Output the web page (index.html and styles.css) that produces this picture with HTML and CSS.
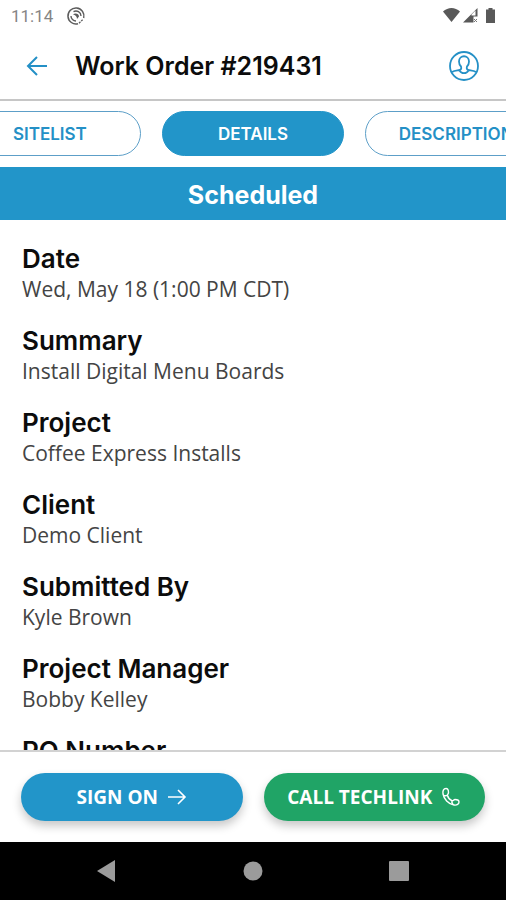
FILE: index.html
```html
<!DOCTYPE html>
<html lang="en">
<head>
<meta charset="utf-8">
<meta name="viewport" content="width=device-width, initial-scale=1">
<title>Work Order #219431</title>
<link rel="stylesheet" href="styles.css">
</head>
<body>
<div class="app">
  <div class="status">
    <span class="time">11:14</span>
    <svg class="status-app" width="20" height="20" viewBox="0 0 20 20" fill="none" stroke="#5c5c5c">
      <path d="M12 17.700A8 8 0 1 1 17.700 12" stroke-width="1.500"/>
      <path d="M13 17.200l4.200-4" stroke-width="1.300" stroke-dasharray="2 1"/>
      <path d="M10 15a5 5 0 0 1-5-5M7.500 5.700A5 5 0 0 1 15 10" stroke-width="1.400"/>
      <path d="M7 8.500C9 6.500 13 7.500 13 10.500L11 13c0-2.500-1.500-4-4-4.500z" fill="#5c5c5c" stroke="none"/>
    </svg>
    <svg class="status-icons" width="56" height="18" viewBox="0 0 56 18" fill="#595959">
      <path d="M1 4.500C6-.2 13-.2 18 4.500L9.500 15z"/>
      <path d="M21 15.500L35.500 1v8.500h-4v6z"/>
      <path d="M29.500 7.500l4-4v5h-4z" fill="#fff"/>
      <path d="M32 12l3 3m0-3l-3 3" stroke="#777"/>
      <path d="M46.500 1h4v1.500H53V16h-9V2.500h2.500z"/>
    </svg>
  </div>
  <header class="header">
    <button class="icon-button" aria-label="Back">
      <svg width="22" height="22" viewBox="0 0 22 22" fill="none" stroke="#2490c6" stroke-width="2"><path d="M21 11H2M11 2L2 11l9 9"/></svg>
    </button>
    <h1>Work Order #219431</h1>
    <button class="icon-button" aria-label="Profile">
      <svg width="32" height="32" viewBox="0 0 32 32" fill="none" stroke="#2490c6" stroke-width="1.800">
        <circle cx="16" cy="16" r="14"/>
        <path d="M4 22c2.500-1.700 5-1.500 7.500-2 2-.5 2-2 1.500-3.500-1.500-1.500-2-3-2-5C11 4.500 21 4.500 21 11.500c0 2-.5 3.500-2 5-.5 1.500-.5 3 1.500 3.500 2.500.5 5 .3 7.500 2"/>
        <path d="M11.500 20.500c2 3.500 7 3.500 9 0"/>
      </svg>
    </button>
  </header>
  <nav class="tabs">
    <button class="tab">SITELIST</button>
    <button class="tab active">DETAILS</button>
    <button class="tab">DESCRIPTION</button>
  </nav>
  <h2 class="banner">Scheduled</h2>
  <main class="details">
    <dl>
      <div class="item"><dt>Date</dt><dd>Wed, May 18 (1:00 PM CDT)</dd></div>
      <div class="item"><dt>Summary</dt><dd>Install Digital Menu Boards</dd></div>
      <div class="item"><dt>Project</dt><dd>Coffee Express Installs</dd></div>
      <div class="item"><dt>Client</dt><dd>Demo Client</dd></div>
      <div class="item"><dt>Submitted By</dt><dd>Kyle Brown</dd></div>
      <div class="item"><dt>Project Manager</dt><dd>Bobby Kelley</dd></div>
      <div class="item"><dt>PO Number</dt></div>
    </dl>
  </main>
  <footer class="actions">
    <button class="action">SIGN ON
      <svg width="20" height="20" viewBox="0 0 20 20" fill="none" stroke="#fff" stroke-width="1.600"><path d="M1 10h17M11 3l7 7-7 7"/></svg>
    </button>
    <button class="action call">CALL TECHLINK
      <svg width="20" height="20" viewBox="0 0 20 20" fill="none" stroke="#fff" stroke-width="1.400" stroke-linejoin="round"><path d="M5 1.500C2.500 1.500 1.500 4 2 7c1 5 5 10 11 11 3 .5 5-1 5-3 0-1.500-2-2.500-4-2.500-1.500 0-1.500 1.500-3 1.200C9 13 7 10.500 6.500 8.500 6.300 7.500 7.500 7 7.500 5.500S7 1.500 5 1.500z"/><path d="M3 8.500c1.500.5 2.500.5 3.500-.5M11 13.700c-.5 1.300 0 2.300 1 3.300"/></svg>
    </button>
  </footer>
  <div class="system-nav">
    <button aria-label="System back"><svg width="20" height="22" viewBox="0 0 20 22" fill="#9b9b9b"><path d="M18 0v22L0 11z"/></svg></button>
    <button aria-label="Home"><svg width="20" height="20" viewBox="0 0 20 20" fill="#9b9b9b"><circle cx="10" cy="10" r="9.500"/></svg></button>
    <button aria-label="Recent apps"><svg width="20" height="20" viewBox="0 0 20 20" fill="#9b9b9b"><rect width="20" height="20" rx="1"/></svg></button>
  </div>
</div>
</body>
</html>
```
FILE: styles.css
```css
* { box-sizing: border-box; }
body { margin: 0; background: #fff; color: #0c0c0c; font-family: "Open Sans", sans-serif; }
button { margin: 0; padding: 0; border: 0; background: none; font: inherit; cursor: pointer; }
svg { display: block; flex: none; }
h1, h2, dl, dd { margin: 0; }
.app { display: flex; flex-direction: column; height: 100vh; overflow: hidden; }
.status { display: flex; align-items: center; height: 32px; flex: none; padding: 0 8px 0 11px; }
.time { width: 55px; color: #858585; font: 400 17px/32px Roboto, sans-serif; }
.status-icons { margin-left: auto; }
.header { display: flex; align-items: center; flex: none; height: 69px; padding: 0 26px; border-bottom: 2px solid #c6c6c6; }
.header h1 { flex: 1; padding-left: 27px; font: 600 25px/32px Inter, sans-serif; }
.tabs { display: flex; flex: none; justify-content: center; gap: 21px; padding: 10px 0 11px; overflow: hidden; }
.tab { flex: 0 0 36%; height: 45px; border: 1px solid #5d9fc8; border-radius: 24px; color: #2490c6; font: 600 17px/20px Inter, sans-serif; }
.tab.active { background: #2295c9; border-color: #2295c9; color: #fff; }
.banner { flex: none; padding: 12px 0 9px; background: #2295c9; color: #fff; text-align: center; font: 700 25px/32px Inter, sans-serif; }
.details { flex: 1; min-height: 0; padding: 24px 22px 0; overflow: hidden; }
.item { margin-bottom: 22px; }
dt { font: 600 26px/30px Inter, sans-serif; }
dd { color: #444; font-size: 21px; line-height: 30px; }
.actions { display: flex; flex: none; gap: 21px; padding: 21px 21px; border-top: 2px solid #d2d2d2; }
.action { display: flex; flex: 1; align-items: center; justify-content: center; gap: 9px; height: 48px; border-radius: 24px; background: #2295c9; color: #fff; font-size: 19px; font-weight: 700; box-shadow: 0 5px 10px rgba(0, 0, 0, 0.22); }
.action.call { background: #20a466; }
.system-nav { display: flex; flex: none; align-items: center; justify-content: center; gap: 126px; height: 58px; background: #000; }
```
